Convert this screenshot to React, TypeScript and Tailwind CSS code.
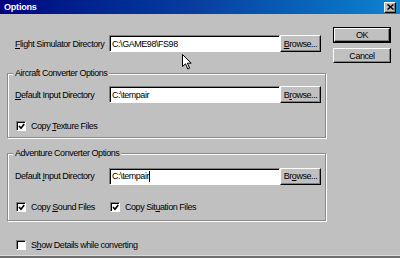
import React from 'react';

const Raised: React.FC<{ className?: string; children?: React.ReactNode }> = ({ className = '', children }) => (
    <div className={`flex items-center justify-center bg-[#c0c0c0] border border-t-white border-l-white border-r-black border-b-black shadow-[inset_-1px_-1px_0_#808080] ${className}`}>
        {children}
    </div>
);

const Field: React.FC<{ value: string; caret?: boolean }> = ({ value, caret }) => (
    <div className="flex items-center w-[171px] h-[17px] bg-white border border-t-[#808080] border-l-[#808080] border-r-white border-b-white shadow-[inset_1px_1px_0_#000] pl-[2px]">
        <span>{value}</span>
        {caret && <span className="w-px h-[11px] bg-black" />}
    </div>
);

const Check: React.FC<{ checked?: boolean; children: React.ReactNode; className?: string }> = ({ checked, children, className = '' }) => (
    <div className={`flex items-center ${className}`}>
        <div className="w-[10px] h-[10px] bg-white border border-t-[#808080] border-l-[#808080] border-r-white border-b-white shadow-[inset_1px_1px_0_#000] flex items-center justify-center">
            {checked && (
                <svg width="7" height="7" viewBox="0 0 7 7">
                    <path d="M1 3 L3 5.2 L6.2 1" fill="none" stroke="#000" strokeWidth="1.6" />
                </svg>
            )}
        </div>
        <span className="ml-[5px]">{children}</span>
    </div>
);

const Group: React.FC<{ title: string; className?: string; children: React.ReactNode }> = ({ title, className = '', children }) => (
    <div className={`relative border border-[#8a8a8a] shadow-[inset_1px_1px_0_#fff,1px_1px_0_#fff] ${className}`}>
        <span className="absolute left-[5px] top-[-6px] px-[2px] bg-[#c0c0c0] leading-[10px]">{title}</span>
        {children}
    </div>
);

const Row: React.FC<{ label: React.ReactNode; value: string; browse: React.ReactNode; caret?: boolean; className?: string }> = ({ label, value, browse, caret, className = '' }) => (
    <div className={`flex items-center h-[17px] ${className}`}>
        <div className="w-[101px] pl-[7px]">{label}</div>
        <Field value={value} caret={caret} />
        <Raised className="w-[41px] h-[17px]">{browse}</Raised>
    </div>
);

export default function App() {
    return (
        <div className="relative flex flex-col w-[400px] h-[258px] bg-[#c0c0c0] overflow-hidden text-black text-[9px] leading-[10px] tracking-[-0.45px] font-['Liberation_Sans',Arial,sans-serif]">
            {/* Title bar */}
            <div className="flex items-center justify-between h-[14px] pl-[4px] pr-[4px] bg-gradient-to-r from-[#000080] via-[#0a3fa0] to-[#1084d0]">
                <span className="text-white font-bold tracking-[-0.2px]">Options</span>
                <Raised className="w-[12px] h-[11px]">
                    <svg width="7" height="6" viewBox="0 0 7 6">
                        <path d="M0.5 0.5 L6.5 5.5 M6.5 0.5 L0.5 5.5" stroke="#000" strokeWidth="1.5" />
                    </svg>
                </Raised>
            </div>

            <div className="flex flex-1">
                <div className="w-[326px] pl-[7px] pt-[21px]">
                    <div className="flex items-center h-[17px]">
                        <div className="w-[102px] pl-[8px]"><u>F</u>light Simulator Directory</div>
                        <Field value="C:\GAME98\FS98" />
                        <Raised className="w-[41px] h-[17px]"><span><u>B</u>rowse...</span></Raised>
                    </div>

                    <Group title="Aircraft Converter Options" className="mt-[21px] h-[65px] pt-[12px]">
                        <Row label={<><u>D</u>efault Input Directory</>} value="C:\tempair" browse={<span>B<u>r</u>owse...</span>} />
                        <Check checked className="mt-[18px] pl-[8px]">Copy <u>T</u>exture Files</Check>
                    </Group>

                    <Group title="Adventure Converter Options" className="mt-[15px] h-[68px] pt-[13px]">
                        <Row label={<>Default <u>I</u>nput Directory</>} value="C:\tempair" caret browse={<span>Br<u>o</u>wse...</span>} className="h-[18px]" />
                        <div className="flex mt-[17px] pl-[8px]">
                            <Check checked className="w-[94px]">Copy <u>S</u>ound Files</Check>
                            <Check checked>Copy Sit<u>u</u>ation Files</Check>
                        </div>
                    </Group>

                    <Check className="mt-[19px] pl-[9px]">S<u>h</u>ow Details while converting</Check>
                </div>

                <div className="ml-[7px] pt-[13px]">
                    <div className="border border-black">
                        <Raised className="w-[56px] h-[14px]">OK</Raised>
                    </div>
                    <Raised className="w-[58px] h-[15px] mt-[5px]">Cancel</Raised>
                </div>
            </div>

            <div className="h-[3px] border-t border-[#dcdcdc] bg-[#6e6e6e]" />

            {/* mouse pointer */}
            <svg className="absolute left-[182px] top-[54px]" width="11" height="16" viewBox="0 0 11 16">
                <path d="M0.5 0.5 L0.5 12.5 L3.5 9.8 L5.8 15 L7.6 14.2 L5.4 9.2 L9.2 9.2 Z" fill="#fff" stroke="#000" strokeWidth="1" />
            </svg>
        </div>
    );
}
